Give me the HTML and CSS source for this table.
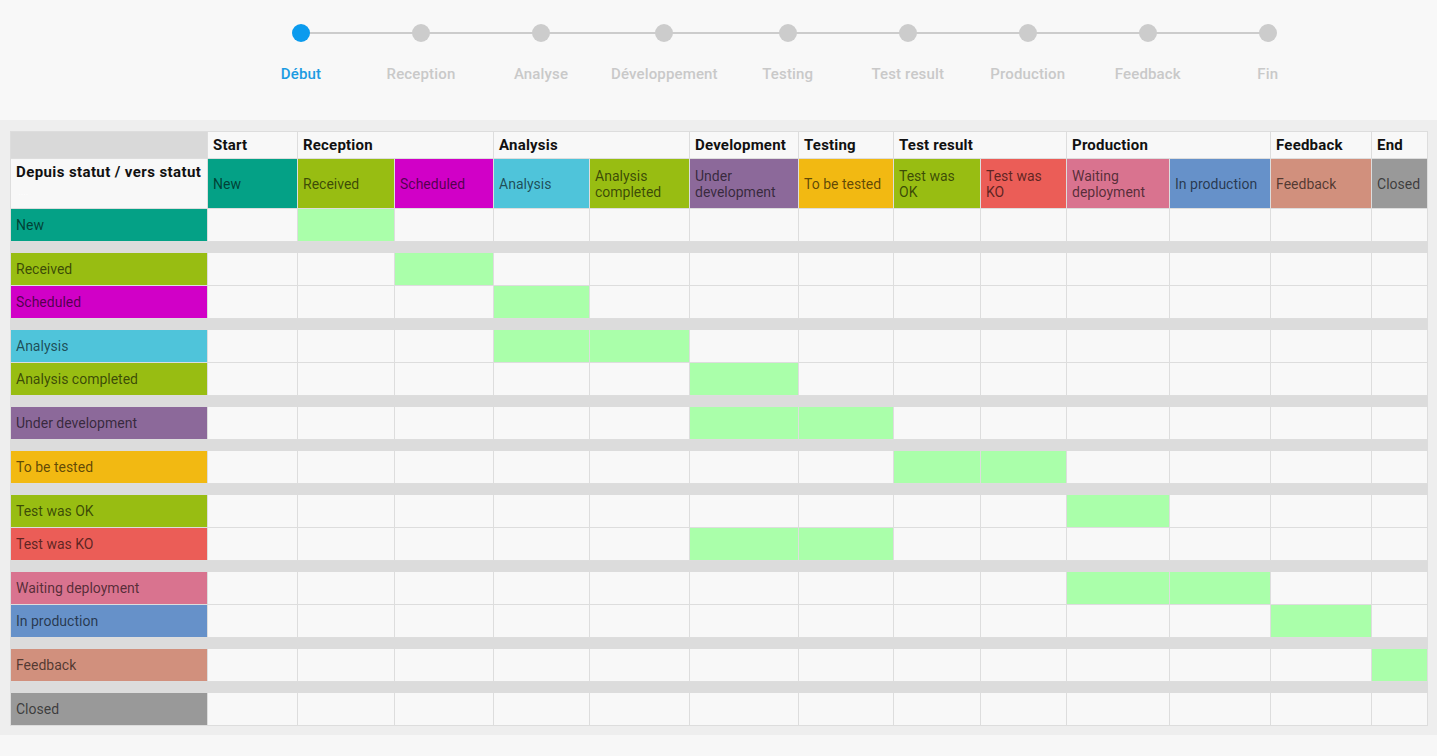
FILE: index.html
```html
<!DOCTYPE html>
<html lang="fr">
<head>
<meta charset="utf-8">
<title>Workflow</title>
<link rel="stylesheet" href="styles.css">
</head>
<body>
<header class="stepper">
  <div class="steps">
    <div class="step active"><span class="dot"></span><span class="label">Début</span></div>
    <div class="step"><span class="dot"></span><span class="label">Reception</span></div>
    <div class="step"><span class="dot"></span><span class="label">Analyse</span></div>
    <div class="step"><span class="dot"></span><span class="label">Développement</span></div>
    <div class="step"><span class="dot"></span><span class="label">Testing</span></div>
    <div class="step"><span class="dot"></span><span class="label">Test result</span></div>
    <div class="step"><span class="dot"></span><span class="label">Production</span></div>
    <div class="step"><span class="dot"></span><span class="label">Feedback</span></div>
    <div class="step"><span class="dot"></span><span class="label">Fin</span></div>
  </div>
</header>
<section class="matrix-wrap">
  <table class="matrix">
    <colgroup>
      <col class="w-label"><col class="w-new"><col class="w-received"><col class="w-scheduled">
      <col class="w-analysis"><col class="w-acompleted"><col class="w-under"><col class="w-tobe">
      <col class="w-ok"><col class="w-ko"><col class="w-waiting"><col class="w-inprod">
      <col class="w-feedback"><col class="w-closed">
    </colgroup>
    <thead>
      <tr class="groups">
        <th class="corner"></th>
        <th>Start</th>
        <th colspan="2">Reception</th>
        <th colspan="2">Analysis</th>
        <th>Development</th>
        <th>Testing</th>
        <th colspan="2">Test result</th>
        <th colspan="2">Production</th>
        <th>Feedback</th>
        <th>End</th>
      </tr>
      <tr class="statuses">
        <th class="title">Depuis statut / vers statut<span class="sub">&nbsp;....</span></th>
        <th class="s-new">New</th>
        <th class="s-olive">Received</th>
        <th class="s-magenta">Scheduled</th>
        <th class="s-cyan">Analysis</th>
        <th class="s-olive">Analysis completed</th>
        <th class="s-purple">Under development</th>
        <th class="s-yellow">To be tested</th>
        <th class="s-olive">Test was OK</th>
        <th class="s-red">Test was KO</th>
        <th class="s-pink">Waiting deployment</th>
        <th class="s-blue">In production</th>
        <th class="s-salmon">Feedback</th>
        <th class="s-gray">Closed</th>
      </tr>
    </thead>
    <tbody>
      <tr class="row"><td class="lab s-new">New</td><td></td><td class="ok"></td><td></td><td></td><td></td><td></td><td></td><td></td><td></td><td></td><td></td><td></td><td></td></tr>
      <tr class="sep"><td colspan="14"></td></tr>
      <tr class="row"><td class="lab s-olive">Received</td><td></td><td></td><td class="ok"></td><td></td><td></td><td></td><td></td><td></td><td></td><td></td><td></td><td></td><td></td></tr>
      <tr class="row"><td class="lab s-magenta">Scheduled</td><td></td><td></td><td></td><td class="ok"></td><td></td><td></td><td></td><td></td><td></td><td></td><td></td><td></td><td></td></tr>
      <tr class="sep"><td colspan="14"></td></tr>
      <tr class="row"><td class="lab s-cyan">Analysis</td><td></td><td></td><td></td><td class="ok"></td><td class="ok"></td><td></td><td></td><td></td><td></td><td></td><td></td><td></td><td></td></tr>
      <tr class="row"><td class="lab s-olive">Analysis completed</td><td></td><td></td><td></td><td></td><td></td><td class="ok"></td><td></td><td></td><td></td><td></td><td></td><td></td><td></td></tr>
      <tr class="sep"><td colspan="14"></td></tr>
      <tr class="row"><td class="lab s-purple">Under development</td><td></td><td></td><td></td><td></td><td></td><td class="ok"></td><td class="ok"></td><td></td><td></td><td></td><td></td><td></td><td></td></tr>
      <tr class="sep"><td colspan="14"></td></tr>
      <tr class="row"><td class="lab s-yellow">To be tested</td><td></td><td></td><td></td><td></td><td></td><td></td><td></td><td class="ok"></td><td class="ok"></td><td></td><td></td><td></td><td></td></tr>
      <tr class="sep"><td colspan="14"></td></tr>
      <tr class="row"><td class="lab s-olive">Test was OK</td><td></td><td></td><td></td><td></td><td></td><td></td><td></td><td></td><td></td><td class="ok"></td><td></td><td></td><td></td></tr>
      <tr class="row"><td class="lab s-red">Test was KO</td><td></td><td></td><td></td><td></td><td></td><td class="ok"></td><td class="ok"></td><td></td><td></td><td></td><td></td><td></td><td></td></tr>
      <tr class="sep"><td colspan="14"></td></tr>
      <tr class="row"><td class="lab s-pink">Waiting deployment</td><td></td><td></td><td></td><td></td><td></td><td></td><td></td><td></td><td></td><td class="ok"></td><td class="ok"></td><td></td><td></td></tr>
      <tr class="row"><td class="lab s-blue">In production</td><td></td><td></td><td></td><td></td><td></td><td></td><td></td><td></td><td></td><td></td><td></td><td class="ok"></td><td></td></tr>
      <tr class="sep"><td colspan="14"></td></tr>
      <tr class="row"><td class="lab s-salmon">Feedback</td><td></td><td></td><td></td><td></td><td></td><td></td><td></td><td></td><td></td><td></td><td></td><td></td><td class="ok"></td></tr>
      <tr class="sep"><td colspan="14"></td></tr>
      <tr class="row"><td class="lab s-gray">Closed</td><td></td><td></td><td></td><td></td><td></td><td></td><td></td><td></td><td></td><td></td><td></td><td></td><td></td></tr>
    </tbody>
  </table>
</section>
</body>
</html>
```
FILE: styles.css
```css
html, body {
  margin: 0;
  padding: 0;
  background: #f7f7f7;
  font-family: Roboto, "Liberation Sans", Arial, sans-serif;
}

/* ---------- stepper ---------- */
.stepper {
  height: 120px;
  box-sizing: border-box;
  padding-top: 24px;
  background: #f8f8f8;
}
.steps {
  display: flex;
  padding-left: 241px;
}
.step {
  position: relative;
  min-width: 120px;
  padding: 0 10px;
  box-sizing: border-box;
  display: flex;
  flex-direction: column;
  align-items: center;
}
.step::before,
.step::after {
  content: "";
  position: absolute;
  top: 8px;
  height: 2px;
  width: 50%;
  background: #cccccc;
}
.step::before { left: 0; }
.step::after { right: 0; }
.step:first-child::before,
.step:last-child::after { display: none; }
.dot {
  position: relative;
  z-index: 1;
  width: 18px;
  height: 18px;
  border-radius: 50%;
  background: #cccccc;
}
.label {
  margin-top: 24px;
  font-size: 15px;
  line-height: 16px;
  font-weight: 500;
  color: #c9c9c9;
  white-space: nowrap;
  letter-spacing: 0.15px;
}
.step.active .dot { background: #0b9bee; }
.step.active .label { color: #1b9be2; }

/* ---------- matrix ---------- */
.matrix-wrap {
  background: #eeeeee;
  padding: 11px 10px 9px 10px;
}
.matrix {
  table-layout: fixed;
  border-collapse: collapse;
  width: 1417px;
  background: #f8f8f8;
}
.w-label { width: 197px; }
.w-new { width: 90px; }
.w-received { width: 97px; }
.w-scheduled { width: 99px; }
.w-analysis { width: 96px; }
.w-acompleted { width: 100px; }
.w-under { width: 109px; }
.w-tobe { width: 95px; }
.w-ok { width: 87px; }
.w-ko { width: 86px; }
.w-waiting { width: 103px; }
.w-inprod { width: 101px; }
.w-feedback { width: 101px; }
.w-closed { width: 56px; }

.matrix th,
.matrix td {
  border: 1px solid #dddddd;
  padding: 0 5px;
  text-align: left;
  overflow: hidden;
}
.groups th {
  height: 26px;
  font-size: 15px;
  font-weight: 700;
  color: #111111;
  background: #f8f8f8;
  letter-spacing: 0.2px;
  vertical-align: middle;
}
.groups th.corner { background: #d9d9d9; }

.statuses th {
  height: 49px;
  font-size: 14px;
  line-height: 16px;
  font-weight: 400;
  color: rgba(0, 0, 0, 0.62);
  vertical-align: middle;
}
.statuses th.title {
  background: #f8f8f8;
  color: #111111;
  font-size: 15px;
  font-weight: 700;
  line-height: 18px;
  letter-spacing: 0.4px;
  white-space: nowrap;
}
.title .sub {
  display: block;
  font-size: 8px;
  line-height: 24px;
  color: #ffffff;
  font-weight: 400;
}

.row td {
  height: 32px;
  font-size: 14px;
  color: rgba(0, 0, 0, 0.62);
  vertical-align: middle;
}
.row td.lab { padding-left: 5px; }
.row td.ok { background: #aaffaa; }

.sep td {
  height: 10px;
  padding: 0;
  background: #dcdcdc;
  border-color: #dcdcdc;
}

/* status colours */
.s-new { background: #04a186; }
.s-olive { background: #98bd12; }
.s-magenta { background: #d100c7; }
.s-cyan { background: #4fc4da; }
.s-purple { background: #8c699a; }
.s-yellow { background: #f2b912; }
.s-red { background: #eb5d57; }
.s-pink { background: #d9738f; }
.s-blue { background: #6691c9; }
.s-salmon { background: #d1907d; }
.s-gray { background: #999999; }
```
